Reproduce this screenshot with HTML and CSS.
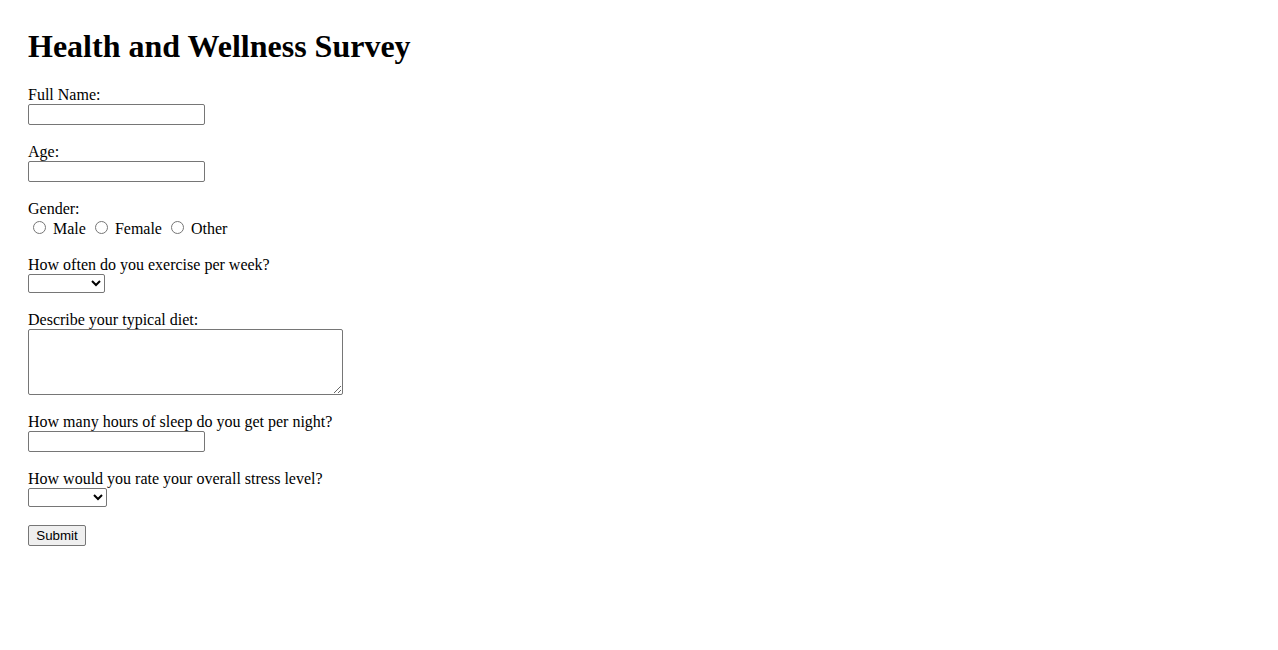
FILE: index.html
```html
<!DOCTYPE html>
<html>
<head>
<meta charset="utf-8">
<title>Health and Wellness Survey</title>
<link rel="stylesheet" href="styles.css">
</head>
<body>
<h1 class="title">Health and Wellness Survey</h1>
<form class="survey">
<label for="name">Full Name:</label><br>
<input class="text-in" type="text" id="name" name="name"><br><br>

<label for="age">Age:</label><br>
<input class="text-in" type="text" id="age" name="age"><br><br>

<label>Gender:</label><br>
<input class="radio" type="radio" id="male" name="gender" value="male"><label for="male"> Male</label>
<input class="radio" type="radio" id="female" name="gender" value="female"><label for="female"> Female</label>
<input class="radio" type="radio" id="other" name="gender" value="other"><label for="other"> Other</label><br><br>

<label for="exercise">How often do you exercise per week?</label><br>
<select class="sel sel-ex" id="exercise" name="exercise">
<option value=""></option>
<option value="0">Never</option>
<option value="1-2">1-2 times</option>
<option value="3-4">3-4 times</option>
<option value="5+">5+ times</option>
</select><br><br>

<label for="diet">Describe your typical diet:</label><br>
<textarea class="area" id="diet" name="diet"></textarea><br><br>

<label for="sleep">How many hours of sleep do you get per night?</label><br>
<input class="text-in" type="text" id="sleep" name="sleep"><br><br>

<label for="stress">How would you rate your overall stress level?</label><br>
<select class="sel sel-st" id="stress" name="stress">
<option value=""></option>
<option value="low">Low</option>
<option value="moderate">Moderate</option>
<option value="high">High</option>
</select><br><br>

<input class="submit" type="submit" value="Submit">
</form>
</body>
</html>
```

FILE: styles.css
```css
html, body {
  background: #ffffff;
}
body {
  margin: 8px;
  padding: 20px;
  font-family: "Liberation Serif", "Times New Roman", serif;
  font-size: 16px;
  color: #000000;
}
.title {
  font-size: 32px;
  font-weight: bold;
  margin: 0 0 21px 0;
  line-height: 37px;
}
.survey {
  margin: 0;
  line-height: 18px;
}
.text-in {
  box-sizing: border-box;
  width: 177px;
  height: 21px;
  margin: 0;
  padding: 1px 2px;
  border: 1px solid #767676;
  border-radius: 2px;
  font-family: "Liberation Sans", Arial, sans-serif;
  font-size: 13.33px;
  vertical-align: bottom;
}
.radio {
  width: 13px;
  height: 13px;
  margin: 3px 3px 0 5px;
  vertical-align: baseline;
}
.sel {
  box-sizing: border-box;
  height: 19px;
  margin: 0;
  font-family: "Liberation Sans", Arial, sans-serif;
  font-size: 13.33px;
  border: 1px solid #767676;
  border-radius: 2px;
  background: #ffffff;
  vertical-align: bottom;
}
.sel-ex {
  width: 77px;
}
.sel-st {
  width: 79px;
}
.area {
  box-sizing: border-box;
  width: 315px;
  height: 66px;
  margin: 0;
  padding: 2px;
  border: 1px solid #767676;
  border-radius: 2px;
  font-family: "Liberation Mono", monospace;
  font-size: 13.33px;
  vertical-align: bottom;
}
.submit {
  box-sizing: border-box;
  height: 21px;
  width: 58px;
  margin: 0;
  padding: 1px 6px;
  font-family: "Liberation Sans", Arial, sans-serif;
  font-size: 13.33px;
  background: #efefef;
  border: 1px solid #767676;
  border-radius: 2px;
  color: #000;
}
```
